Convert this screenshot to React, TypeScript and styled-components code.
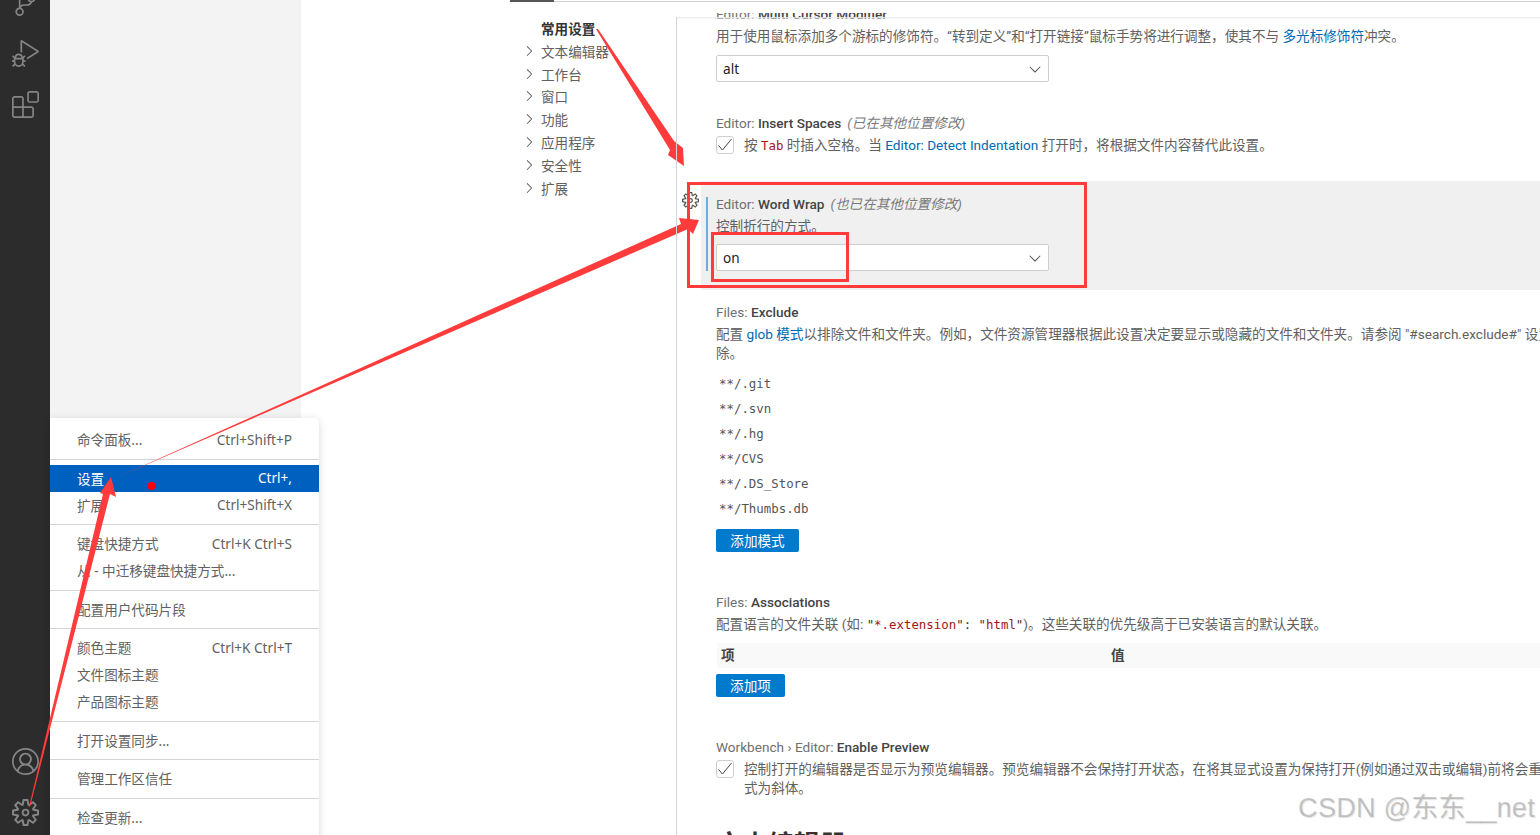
import styled, { createGlobalStyle } from 'styled-components';
import { VscAccount, VscChevronDown, VscChevronRight, VscDebugAlt, VscExtensions, VscSettingsGear, VscSourceControl } from 'react-icons/vsc';

const GlobalStyle = createGlobalStyle`
  html, body {
    margin: 0;
    padding: 0;
    overflow: hidden;
    background: #fff;
  }
`;

const uiFont = `"Noto Sans", "Noto Sans CJK SC", sans-serif`;
const settingsFont = `Roboto, "Noto Sans CJK SC", sans-serif`;
const monoFont = `"DejaVu Sans Mono", "Noto Sans CJK SC", monospace`;

const Page = styled.div`
  position: relative;
  display: flex;
  width: 1540px;
  height: 835px;
  overflow: hidden;
  font-family: ${uiFont};
  font-size: 13.6px;
  color: #616161;
`;
const ActivityBar = styled.nav`
  display: flex;
  flex-direction: column;
  justify-content: space-between;
  flex: none;
  width: 50px;
  background: #2c2c2c;
`;
const ActivityGroup = styled.div<{ $top?: number; $bottom?: number }>`
  display: flex;
  flex-direction: column;
  margin-top: ${(p) => p.$top ?? 0}px;
  margin-bottom: ${(p) => p.$bottom ?? 0}px;
`;
const ActivityIcon = styled.div`
  display: flex;
  align-items: center;
  justify-content: center;
  height: 51px;
  color: #858585;
  font-size: 27px;
`;
const SideBar = styled.aside`
  flex: none;
  width: 251px;
  background: #f3f3f3;
`;
const Editor = styled.main`
  display: flex;
  flex-direction: column;
  flex: 1;
  min-width: 0;
  padding-left: 209px;
`;
const TabLine = styled.div`
  flex: none;
  height: 2px;
  margin-bottom: 11px;
  border-bottom: 1px solid #d0d0d0;
  box-sizing: border-box;
`;
const ActiveTab = styled.div`
  width: 44px;
  height: 2px;
  background: #555;
`;
const Body = styled.div`
  display: flex;
  flex: 1;
  min-height: 0;
`;
const Toc = styled.ul`
  flex: none;
  width: 166px;
  margin: 0;
  padding: 3.5px 0 0 15px;
  box-sizing: border-box;
  list-style: none;
`;
const TocItem = styled.li<{ $active?: boolean }>`
  display: flex;
  align-items: center;
  height: 22.85px;
  gap: 4px;
  white-space: nowrap;
  font-weight: ${(p) => (p.$active ? 600 : 400)};
  color: ${(p) => (p.$active ? '#333' : '#616161')};
  svg {
    flex: none;
    font-size: 16px;
    margin-left: -4px;
    color: #555;
  }
`;
const TocSpacer = styled.span`
  flex: none;
  width: 16px;
  margin-left: -4px;
`;
const Content = styled.section`
  position: relative;
  flex: 1;
  min-width: 0;
  overflow: hidden;
  font-family: ${settingsFont};
  /* list header shadow */
  &::before {
    content: '';
    position: absolute;
    inset: 4px 0 auto 0;
    height: 3px;
    background: linear-gradient(#ececec, #ffffff00);
    z-index: 1;
  }
  /* the divider starts lower than the clipped list */
  &::after {
    content: '';
    position: absolute;
    inset: 4px auto 0 0;
    width: 1px;
    background: #d4d4d4;
    z-index: 1;
  }
`;
const ScrolledList = styled.div`
  margin-top: -10px;
  width: 1100px;
`;
const Setting = styled.div<{ $height: number; $pad?: number; $focused?: boolean }>`
  position: relative;
  box-sizing: border-box;
  height: ${(p) => p.$height}px;
  margin-left: ${(p) => (p.$focused ? 25 : 0)}px;
  padding: ${(p) => p.$pad ?? 0}px 0 0 ${(p) => (p.$focused ? 15 : 40)}px;
  background: ${(p) => (p.$focused ? '#f0f0f0' : 'transparent')};
  white-space: nowrap;
`;
const FocusBar = styled.div`
  position: absolute;
  left: 5px;
  top: 16px;
  width: 2px;
  height: 74px;
  background: #6aaee0;
`;
const RowGear = styled.span`
  position: absolute;
  left: -19.5px;
  top: 10.5px;
  display: flex;
  color: #555;
  font-size: 17px;
`;
const Title = styled.div`
  height: 22px;
  line-height: 22px;
  color: #6f6f6f;
`;
const TitleName = styled.span`
  color: #444;
  font-weight: 500;
`;
const Modified = styled.em`
  margin-left: 6px;
  color: #7a7a7a;
  font-style: italic;
`;
const Description = styled.div`
  line-height: 19px;
  padding-top: 2px;
`;
const Link = styled.span`
  color: #006ab1;
`;
const InlineCode = styled.code`
  font-family: ${monoFont};
  font-size: 12.4px;
  color: #a31515;
`;
const CodePlain = styled.span`
  color: #333;
`;
const Select = styled.div<{ $top: number }>`
  display: flex;
  align-items: center;
  justify-content: space-between;
  box-sizing: border-box;
  width: 333px;
  height: 27px;
  margin-top: ${(p) => p.$top}px;
  padding: 0 4px 0 6px;
  background: #fff;
  border: 1px solid #cecece;
  border-radius: 2px;
  color: #222;
  font-family: ${uiFont};
  svg {
    font-size: 18px;
    color: #555;
  }
`;
const CheckRow = styled.div`
  display: flex;
  gap: 10px;
  padding-top: 2px;
  line-height: 18.5px;
`;
const CheckBox = styled.div`
  display: flex;
  align-items: center;
  justify-content: center;
  flex: none;
  box-sizing: border-box;
  width: 18px;
  height: 18px;
  border: 1px solid #cecece;
  border-radius: 3px;
  background: #fff;
  color: #444;
`;
const GlobList = styled.ul`
  margin: 8px 0 0;
  padding: 0 0 0 3px;
  list-style: none;
  font-family: ${monoFont};
  font-size: 12.4px;
  color: #555;
`;
const GlobItem = styled.li`
  height: 25px;
  line-height: 25px;
`;
const BlueButton = styled.div<{ $width: number; $top: number }>`
  display: flex;
  align-items: center;
  justify-content: center;
  box-sizing: border-box;
  width: ${(p) => p.$width}px;
  height: 23px;
  margin-top: ${(p) => p.$top}px;
  padding-bottom: 2px;
  background: #007acc;
  border-radius: 2px;
  color: #fff;
`;
const TableHead = styled.div`
  display: grid;
  grid-template-columns: 390px 1fr;
  height: 25px;
  line-height: 25px;
  margin: 9px 0 0 1px;
  padding-left: 4px;
  background: #f9f9f9;
  color: #444;
  font-weight: 700;
`;
const SectionHeading = styled.h2`
  margin: 0;
  color: #333;
  font-size: 26px;
  font-weight: 600;
  line-height: 36px;
  padding-left: 40px;
`;
const Menu = styled.div`
  position: absolute;
  left: 50px;
  top: 418px;
  width: 269px;
  height: 430px;
  padding-top: 8.5px;
  box-sizing: border-box;
  background: #fff;
  border-top-right-radius: 5px;
  box-shadow: 0 2px 8px rgba(0, 0, 0, 0.16);
`;
const MenuItem = styled.div<{ $selected?: boolean }>`
  display: flex;
  justify-content: space-between;
  align-items: center;
  box-sizing: border-box;
  height: 27px;
  padding: 0 27px 2px;
  background: ${(p) => (p.$selected ? '#0060c0' : 'transparent')};
  color: ${(p) => (p.$selected ? '#fff' : '#616161')};
`;
const MenuSeparator = styled.div`
  height: 1px;
  margin: 5px 0 5.5px;
  background: #d4d4d4;
`;
const Annotations = styled.svg`
  position: absolute;
  inset: 0;
  pointer-events: none;
`;
const Watermark = styled.div`
  position: absolute;
  right: 5px;
  bottom: 10px;
  font-family: "Liberation Sans", "Noto Sans CJK SC", sans-serif;
  font-size: 27px;
  line-height: 34px;
  letter-spacing: 0.3px;
  color: rgba(140, 140, 140, 0.45);
  text-shadow: 1px 1px 1px rgba(200, 200, 200, 0.5);
  white-space: nowrap;
`;

const tocItems = ['文本编辑器', '工作台', '窗口', '功能', '应用程序', '安全性', '扩展'];
const globs = ['**/.git', '**/.svn', '**/.hg', '**/CVS', '**/.DS_Store', '**/Thumbs.db'];

function Tick() {
  return (
    <svg width="16" height="16" viewBox="0 0 16 16" fill="none" stroke="currentColor" strokeWidth="1">
      <path d="M1.5 8.5 L5.5 13 L14.5 2" />
    </svg>
  );
}

export default function App() {
  return (
    <Page>
      <GlobalStyle />
      <ActivityBar>
        <ActivityGroup $top={-23}>
          <ActivityIcon><VscSourceControl /></ActivityIcon>
          <ActivityIcon><VscDebugAlt /></ActivityIcon>
          <ActivityIcon><VscExtensions /></ActivityIcon>
        </ActivityGroup>
        <ActivityGroup $bottom={-3}>
          <ActivityIcon><VscAccount /></ActivityIcon>
          <ActivityIcon><VscSettingsGear /></ActivityIcon>
        </ActivityGroup>
      </ActivityBar>
      <SideBar />
      <Editor>
        <TabLine><ActiveTab /></TabLine>
        <Body>
          <Toc>
            <TocItem $active><TocSpacer />常用设置</TocItem>
            {tocItems.map((item) => (
              <TocItem key={item}><VscChevronRight />{item}</TocItem>
            ))}
          </Toc>
          <Content>
            <ScrolledList>
              <Setting $height={109}>
                <Title>Editor: <TitleName>Multi Cursor Modifier</TitleName></Title>
                <Description>
                  用于使用鼠标添加多个游标的修饰符。“转到定义”和“打开链接”鼠标手势将进行调整，使其不与 <Link>多光标修饰符</Link>冲突。
                </Description>
                <Select $top={9}>alt<VscChevronDown /></Select>
              </Setting>
              <Setting $height={69}>
                <Title>Editor: <TitleName>Insert Spaces</TitleName><Modified>(已在其他位置修改)</Modified></Title>
                <CheckRow>
                  <CheckBox><Tick /></CheckBox>
                  <span>按 <InlineCode>Tab</InlineCode> 时插入空格。当 <Link>Editor: Detect Indentation</Link> 打开时，将根据文件内容替代此设置。</span>
                </CheckRow>
              </Setting>
              <Setting $height={109} $pad={12} $focused>
                <RowGear><VscSettingsGear /></RowGear>
                <FocusBar />
                <Title>Editor: <TitleName>Word Wrap</TitleName><Modified>(也已在其他位置修改)</Modified></Title>
                <Description>控制折行的方式。</Description>
                <Select $top={8}>on<VscChevronDown /></Select>
              </Setting>
              <Setting $height={301} $pad={11}>
                <Title>Files: <TitleName>Exclude</TitleName></Title>
                <Description>
                  配置 <Link>glob 模式</Link>以排除文件和文件夹。例如，文件资源管理器根据此设置决定要显示或隐藏的文件和文件夹。请参阅 "#search.exclude#" 设置以定义特定于搜索的排<br />除。
                </Description>
                <GlobList>
                  {globs.map((glob) => <GlobItem key={glob}>{glob}</GlobItem>)}
                </GlobList>
                <BlueButton $width={83} $top={8}>添加模式</BlueButton>
              </Setting>
              <Setting $height={145}>
                <Title>Files: <TitleName>Associations</TitleName></Title>
                <Description>
                  配置语言的文件关联 (如: <InlineCode><CodePlain>"</CodePlain>*.extension<CodePlain>": "</CodePlain>html<CodePlain>"</CodePlain></InlineCode>)。这些关联的优先级高于已安装语言的默认关联。
                </Description>
                <TableHead><span>项</span><span>值</span></TableHead>
                <BlueButton $width={69} $top={6}>添加项</BlueButton>
              </Setting>
              <Setting $height={91}>
                <Title>Workbench › Editor: <TitleName>Enable Preview</TitleName></Title>
                <CheckRow>
                  <CheckBox><Tick /></CheckBox>
                  <span>控制打开的编辑器是否显示为预览编辑器。预览编辑器不会保持打开状态，在将其显式设置为保持打开(例如通过双击或编辑)前将会重复使用。预览编辑器的标题显示<br />式为斜体。</span>
                </CheckRow>
              </Setting>
              <SectionHeading>文本编辑器</SectionHeading>
            </ScrolledList>
          </Content>
        </Body>
      </Editor>
      <Menu>
        <MenuItem><span>命令面板...</span><span>Ctrl+Shift+P</span></MenuItem>
        <MenuSeparator />
        <MenuItem $selected><span>设置</span><span>Ctrl+,</span></MenuItem>
        <MenuItem><span>扩展</span><span>Ctrl+Shift+X</span></MenuItem>
        <MenuSeparator />
        <MenuItem><span>键盘快捷方式</span><span>Ctrl+K Ctrl+S</span></MenuItem>
        <MenuItem><span>从 - 中迁移键盘快捷方式...</span></MenuItem>
        <MenuSeparator />
        <MenuItem><span>配置用户代码片段</span></MenuItem>
        <MenuSeparator />
        <MenuItem><span>颜色主题</span><span>Ctrl+K Ctrl+T</span></MenuItem>
        <MenuItem><span>文件图标主题</span></MenuItem>
        <MenuItem><span>产品图标主题</span></MenuItem>
        <MenuSeparator />
        <MenuItem><span>打开设置同步...</span></MenuItem>
        <MenuSeparator />
        <MenuItem><span>管理工作区信任</span></MenuItem>
        <MenuSeparator />
        <MenuItem><span>检查更新...</span></MenuItem>
      </Menu>
      <Annotations width="1540" height="835" viewBox="0 0 1540 835">
        <g fill="#ff3b3b">
          <polygon points="596,29 598,29 674,141 683,148 684,166 668,155 670,150" />
          <polygon points="118,477 681,224 679,218 699,220 693,234 688,229" />
          <polygon points="29,807 103,494 100,493 111,477 116,497 110,494 30,807" />
          <circle cx="151.5" cy="486" r="4" fill="#f00" />
        </g>
        <g fill="none" stroke="#ff3b3b" strokeWidth="3">
          <rect x="688.5" y="183.5" width="397" height="103" />
          <rect x="712.5" y="233.5" width="135" height="47" />
        </g>
      </Annotations>
      <Watermark>CSDN @东东__net</Watermark>
    </Page>
  );
}
